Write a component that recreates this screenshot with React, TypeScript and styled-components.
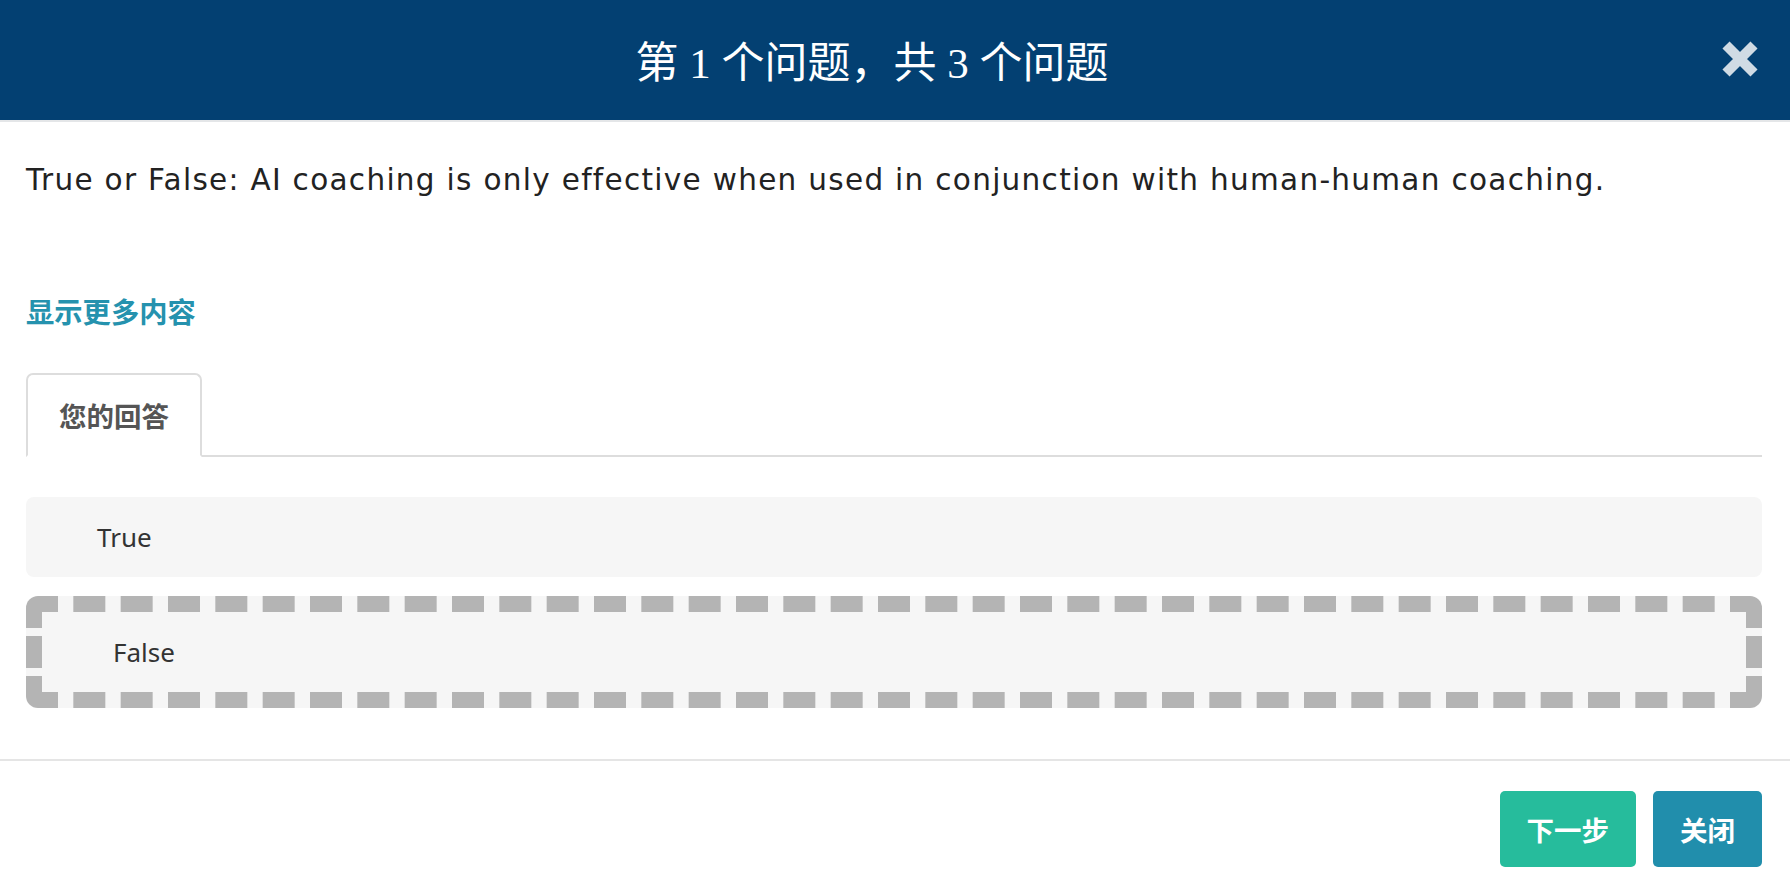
import React from "react";
import styled, { createGlobalStyle } from "styled-components";

const Global = createGlobalStyle`
  html, body { margin: 0; padding: 0; background: #ffffff; }
  body { font-family: "Noto Sans", "Noto Sans CJK SC", sans-serif; }
  * { box-sizing: border-box; }
`;

const Modal = styled.div`
  width: 1790px;
  height: 894px;
  display: flex;
  flex-direction: column;
  background: #ffffff;
`;

const Header = styled.header`
  height: 122px;
  background: #034072;
  border-bottom: 2px solid #e4e6e8;
  display: flex;
  align-items: center;
  padding: 0 31px 0 23px;
`;

const Title = styled.h1`
  flex: 1;
  margin: 0;
  text-align: center;
  color: #ffffff;
  font-family: "Liberation Serif", "Noto Sans CJK SC", serif;
  font-weight: 400;
  font-size: 43px;
  line-height: 1;
  padding-top: 7px;
`;

const CloseButton = styled.button`
  width: 38px;
  height: 40px;
  padding: 0;
  border: none;
  background: transparent;
  cursor: pointer;
  display: flex;
  align-items: center;
  justify-content: center;
  margin-top: -2px;
`;

const Body = styled.main`
  padding: 38px 28px 0 26px;
  display: flex;
  flex-direction: column;
`;

const Question = styled.p`
  margin: 0;
  font-family: "DejaVu Sans", "Noto Sans CJK SC", sans-serif;
  font-size: 29.5px;
  letter-spacing: 1.3px;
  line-height: 40px;
  color: #222222;
  white-space: nowrap;
`;

const MoreLink = styled.a`
  margin-top: 91px;
  align-self: flex-start;
  font-family: "Noto Sans CJK SC", sans-serif;
  font-weight: 700;
  font-size: 28.3px;
  line-height: 40px;
  color: #2592ae;
  text-decoration: none;
  cursor: pointer;
`;

const TabBar = styled.div`
  margin-top: 42px;
  display: flex;
  border-bottom: 2px solid #dddddd;
`;

const Tab = styled.div`
  margin-bottom: -2px;
  height: 84px;
  padding: 0 31px;
  border: 2px solid #dddddd;
  border-bottom-color: #ffffff;
  border-radius: 7px 7px 0 0;
  background: #ffffff;
  display: flex;
  align-items: center;
  font-family: "Noto Sans CJK SC", sans-serif;
  font-weight: 700;
  font-size: 27.5px;
  color: #555555;
`;

const Options = styled.div`
  margin-top: 40px;
  display: flex;
  flex-direction: column;
  gap: 19px;
`;

const Option = styled.div<{ $selected?: boolean }>`
  min-height: ${(p) => (p.$selected ? 112 : 80)}px;
  background: #f6f6f6;
  border-radius: ${(p) => (p.$selected ? 12 : 8)}px;
  border: ${(p) => (p.$selected ? "16px dashed #b4b4b4" : "none")};
  padding-left: 71px;
  display: flex;
  align-items: center;
  font-family: "Noto Sans", "Open Sans", sans-serif;
  font-size: 26px;
  color: #333333;
`;

const Footer = styled.footer`
  margin-top: 51px;
  border-top: 2px solid #e5e5e5;
  padding: 30px 28px 0 26px;
  display: flex;
  justify-content: flex-end;
  gap: 17px;
`;

const ActionButton = styled.button<{ $tone: "next" | "close" }>`
  height: 76px;
  padding: 0 27px;
  border: none;
  border-radius: 5px;
  background: ${(p) => (p.$tone === "next" ? "#26bc9c" : "#218eac")};
  color: #ffffff;
  font-family: "Noto Sans CJK SC", sans-serif;
  font-weight: 700;
  font-size: 27.5px;
  cursor: pointer;
`;

export default function App() {
  return (
    <>
      <Global />
      <Modal>
        <Header>
          <Title>第 1 个问题，共 3 个问题</Title>
          <CloseButton aria-label="close">
            <svg width="38" height="40" viewBox="0 0 38 40">
              <path
                d="M5 6 L33 34 M33 6 L5 34"
                stroke="#d0dbe4"
                strokeWidth="10"
                strokeLinecap="butt"
              />
            </svg>
          </CloseButton>
        </Header>
        <Body>
          <Question>
            True or False: AI coaching is only effective when used in conjunction with human-human coaching.
          </Question>
          <MoreLink>显示更多内容</MoreLink>
          <TabBar>
            <Tab>您的回答</Tab>
          </TabBar>
          <Options>
            <Option>True</Option>
            <Option $selected>False</Option>
          </Options>
        </Body>
        <Footer>
          <ActionButton $tone="next">下一步</ActionButton>
          <ActionButton $tone="close">关闭</ActionButton>
        </Footer>
      </Modal>
    </>
  );
}
